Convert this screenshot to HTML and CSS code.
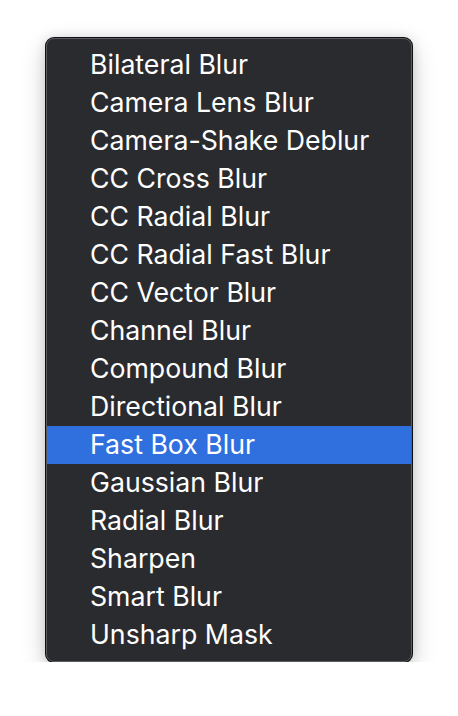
FILE: index.html
```html
<!DOCTYPE html>
<html>
<head>
<meta charset="utf-8">
<link rel="stylesheet" href="styles.css">
</head>
<body>
<div class="page">
  <ul class="menu">
    <li class="item">Bilateral Blur</li>
    <li class="item">Camera Lens Blur</li>
    <li class="item">Camera-Shake Deblur</li>
    <li class="item">CC Cross Blur</li>
    <li class="item">CC Radial Blur</li>
    <li class="item">CC Radial Fast Blur</li>
    <li class="item">CC Vector Blur</li>
    <li class="item">Channel Blur</li>
    <li class="item">Compound Blur</li>
    <li class="item">Directional Blur</li>
    <li class="item selected">Fast Box Blur</li>
    <li class="item">Gaussian Blur</li>
    <li class="item">Radial Blur</li>
    <li class="item">Sharpen</li>
    <li class="item">Smart Blur</li>
    <li class="item">Unsharp Mask</li>
  </ul>
</div>
</body>
</html>
```
FILE: styles.css
```css
html, body {
  margin: 0;
  padding: 0;
  background: #ffffff;
}
.page {
  padding: 38px 0 0 46px;
}
.menu {
  list-style: none;
  margin: 0;
  width: 366px;
  box-sizing: border-box;
  padding: 7px 0;
  background: #2a2b2f;
  border: 1px solid #5b5c5f;
  border-radius: 8px;
  box-shadow: 0 0 0 1px #101012, 0 8px 24px rgba(0,0,0,0.22), 0 0 12px rgba(0,0,0,0.12);
  display: flex;
  flex-direction: column;
}
.item {
  height: 38px;
  box-sizing: border-box;
  padding: 0 0 3px 43px;
  display: flex;
  align-items: center;
  font-family: Inter, "Noto Sans", sans-serif;
  font-size: 26.7px;
  color: #ffffff;
}
.item.selected {
  background: #306fde;
}
```
